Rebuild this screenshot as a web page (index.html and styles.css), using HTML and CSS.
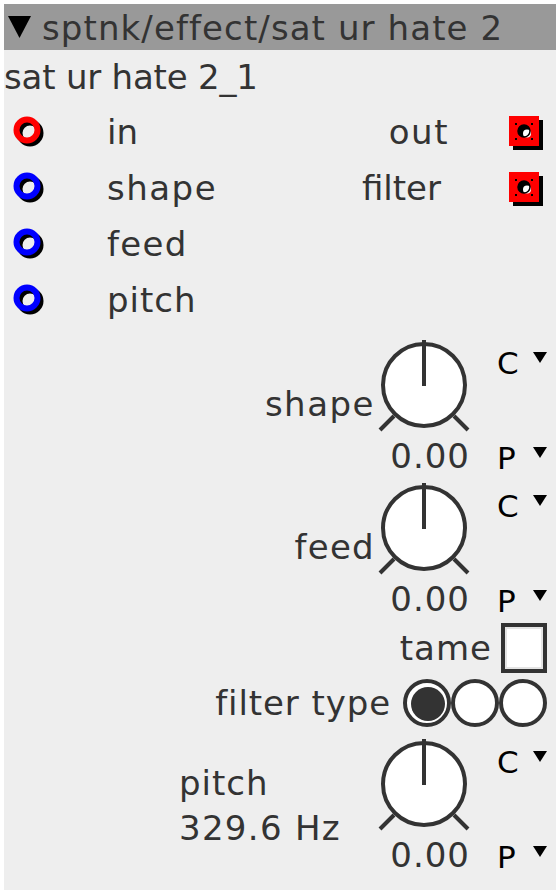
FILE: index.html
```html
<!DOCTYPE html>
<html>
<head>
<meta charset="utf-8">
<link rel="stylesheet" href="styles.css">
</head>
<body>
<div class="panel">
  <div class="header">
    <svg class="collapse" width="23" height="22" viewBox="0 0 23 22"><polygon points="0,0 23,0 11.5,22"/></svg>
    <span class="title">sptnk/effect/sat ur hate 2</span>
  </div>
  <div class="instance">sat ur hate 2_1</div>

  <div class="ports">
    <div class="inlets">
      <div class="port">
        <svg class="jack" width="40" height="40" viewBox="0 0 40 40"><circle class="shadow" cx="22" cy="22" r="10.5"/><circle class="ring red" cx="19" cy="19" r="10.5"/></svg>
        <span class="plabel">in</span>
      </div>
      <div class="port">
        <svg class="jack" width="40" height="40" viewBox="0 0 40 40"><circle class="shadow" cx="22" cy="22" r="10.5"/><circle class="ring blue" cx="19" cy="19" r="10.5"/></svg>
        <span class="plabel ls15">shape</span>
      </div>
      <div class="port">
        <svg class="jack" width="40" height="40" viewBox="0 0 40 40"><circle class="shadow" cx="22" cy="22" r="10.5"/><circle class="ring blue" cx="19" cy="19" r="10.5"/></svg>
        <span class="plabel ls13">feed</span>
      </div>
      <div class="port">
        <svg class="jack" width="40" height="40" viewBox="0 0 40 40"><circle class="shadow" cx="22" cy="22" r="10.5"/><circle class="ring blue" cx="19" cy="19" r="10.5"/></svg>
        <span class="plabel ls1">pitch</span>
      </div>
    </div>
    <div class="outlets">
      <div class="port out">
        <span class="olabel ls15">out</span>
        <svg class="outjack" width="40" height="40" viewBox="0 0 40 40"><rect class="oshadow" x="8" y="9" width="30" height="30"/><rect class="obox" x="4" y="5" width="30" height="30"/><g class="odots"><rect x="10" y="12" width="2" height="2"/><rect x="26" y="12" width="2" height="2"/><rect x="10" y="27" width="2" height="2"/><rect x="26" y="27" width="2" height="2"/></g><circle class="ohole" cx="19" cy="20" r="6"/><circle class="ohl" cx="22" cy="22.5" r="4"/><circle class="ohole2" cx="19" cy="20" r="6"/></svg>
      </div>
      <div class="port out">
        <span class="olabel filt">filter</span>
        <svg class="outjack" width="40" height="40" viewBox="0 0 40 40"><rect class="oshadow" x="8" y="9" width="30" height="30"/><rect class="obox" x="4" y="5" width="30" height="30"/><g class="odots"><rect x="10" y="12" width="2" height="2"/><rect x="26" y="12" width="2" height="2"/><rect x="10" y="27" width="2" height="2"/><rect x="26" y="27" width="2" height="2"/></g><circle class="ohole" cx="19" cy="20" r="6"/><circle class="ohl" cx="22" cy="22.5" r="4"/><circle class="ohole2" cx="19" cy="20" r="6"/></svg>
      </div>
    </div>
  </div>

  <div class="krow first">
    <div class="klabel ls15">shape</div>
    <div class="kcol">
      <svg class="knob" width="96" height="96" viewBox="0 0 96 96"><line x1="4" y1="92" x2="18" y2="78"/><line x1="92" y1="92" x2="78" y2="78"/><circle cx="48" cy="47" r="41"/><line x1="48" y1="2" x2="48" y2="48"/></svg>
      <div class="kval">0.00</div>
    </div>
    <div class="cp">
      <div class="cpi"><span class="cpt">C</span><svg class="tri" width="14" height="11" viewBox="0 0 14 11"><polygon points="0,0 14,0 7,11"/></svg></div>
      <div class="cpi"><span class="cpt">P</span><svg class="tri" width="14" height="11" viewBox="0 0 14 11"><polygon points="0,0 14,0 7,11"/></svg></div>
    </div>
  </div>

  <div class="krow">
    <div class="klabel ls13">feed</div>
    <div class="kcol">
      <svg class="knob" width="96" height="96" viewBox="0 0 96 96"><line x1="4" y1="92" x2="18" y2="78"/><line x1="92" y1="92" x2="78" y2="78"/><circle cx="48" cy="47" r="41"/><line x1="48" y1="2" x2="48" y2="48"/></svg>
      <div class="kval">0.00</div>
    </div>
    <div class="cp">
      <div class="cpi"><span class="cpt">C</span><svg class="tri" width="14" height="11" viewBox="0 0 14 11"><polygon points="0,0 14,0 7,11"/></svg></div>
      <div class="cpi"><span class="cpt">P</span><svg class="tri" width="14" height="11" viewBox="0 0 14 11"><polygon points="0,0 14,0 7,11"/></svg></div>
    </div>
  </div>

  <div class="crow tame">
    <span class="clabel ls1">tame</span>
    <div class="checkbox"></div>
  </div>

  <div class="crow ftype">
    <span class="clabel ls09">filter type</span>
    <svg class="radios" width="148" height="50" viewBox="0 0 148 50"><circle class="rc" cx="25" cy="25" r="22"/><circle class="rc" cx="73" cy="25" r="22"/><circle class="rc" cx="121" cy="25" r="22"/><circle class="rdot" cx="26" cy="26" r="17"/></svg>
  </div>

  <div class="krow last">
    <div class="klabel multi"><span class="ls1">pitch</span><br><span class="ls13">329.6 Hz</span></div>
    <div class="kcol">
      <svg class="knob" width="96" height="96" viewBox="0 0 96 96"><line x1="4" y1="92" x2="18" y2="78"/><line x1="92" y1="92" x2="78" y2="78"/><circle cx="48" cy="47" r="41"/><line x1="48" y1="2" x2="48" y2="48"/></svg>
      <div class="kval">0.00</div>
    </div>
    <div class="cp">
      <div class="cpi"><span class="cpt">C</span><svg class="tri" width="14" height="11" viewBox="0 0 14 11"><polygon points="0,0 14,0 7,11"/></svg></div>
      <div class="cpi"><span class="cpt">P</span><svg class="tri" width="14" height="11" viewBox="0 0 14 11"><polygon points="0,0 14,0 7,11"/></svg></div>
    </div>
  </div>
</div>
</body>
</html>
```
FILE: styles.css
```css
html, body {
  margin: 0;
  padding: 0;
  background: #ffffff;
}
body {
  padding: 4px;
  font-family: "DejaVu Sans", sans-serif;
  color: #333333;
  font-size: 34px;
}
.ls09 { letter-spacing: 0.9px; }
.ls1 { letter-spacing: 1px; }
.ls13 { letter-spacing: 1.3px; }
.ls15 { letter-spacing: 1.5px; }
.panel {
  width: 552px;
  height: 886px;
  background: #eeeeee;
  display: flex;
  flex-direction: column;
  box-sizing: border-box;
}
.header {
  height: 46px;
  background: #999999;
  display: flex;
  align-items: center;
  box-sizing: border-box;
  padding-left: 4px;
}
.collapse {
  display: block;
  margin-right: 11px;
}
.collapse polygon { fill: #000; }
.title {
  line-height: 46px;
  white-space: nowrap;
  padding-top: 2px;
  letter-spacing: 1.1px;
}
.instance {
  height: 54px;
  line-height: 54px;
  white-space: nowrap;
  letter-spacing: -0.2px;
}
.ports {
  display: flex;
  justify-content: space-between;
}
.inlets, .outlets {
  display: flex;
  flex-direction: column;
}
.port {
  height: 56px;
  display: flex;
  align-items: center;
  line-height: 56px;
}
.jack {
  display: block;
  margin-left: 4px;
  margin-top: -2px;
}
.jack .shadow { fill: none; stroke: #000; stroke-width: 6; }
.jack .ring { fill: none; stroke-width: 6; }
.jack .red { stroke: #ff0000; }
.jack .blue { stroke: #0000ff; }
.plabel { margin-left: 59px; }
.outlets { align-items: flex-end; }
.out { justify-content: flex-end; }
.olabel { margin-right: 56px; }
.olabel.filt { margin-right: 64px; }
.outjack { display: block; margin-right: 11px; margin-top: -2px; }
.oshadow { fill: #000; }
.obox { fill: #ff0000; }
.odots rect { fill: #000; }
.ohole { fill: #000; }
.ohl { fill: #fff; }
.ohole2 { fill: none; stroke: #000; stroke-width: 1.5; }

.krow {
  height: 139px;
  display: flex;
  justify-content: flex-end;
  align-items: flex-start;
}
.krow.first { margin-top: 10px; margin-bottom: 4px; }
.krow.last { margin-top: 7px; }
.klabel {
  padding-top: 46px;
  line-height: 40px;
  margin-right: 1px;
  text-align: right;
  white-space: nowrap;
}
.klabel.multi {
  padding-top: 24px;
  line-height: 45px;
  text-align: left;
  width: 194px;
  margin-right: 3px;
}
.kcol {
  width: 96px;
  display: flex;
  flex-direction: column;
}
.knob { display: block; }
.knob line { stroke: #333; stroke-width: 4; }
.knob circle { fill: #fff; stroke: #333; stroke-width: 4; }
.kval {
  margin-top: 4px;
  line-height: 36px;
  text-align: right;
  margin-right: 2px;
  letter-spacing: 1px;
  white-space: nowrap;
}
.cp {
  margin-left: 25px;
  width: 59px;
  height: 123px;
  padding-top: 11px;
  display: flex;
  flex-direction: column;
  justify-content: space-between;
}
.cpi {
  display: flex;
  align-items: flex-start;
  height: 28px;
}
.cpt {
  width: 36px;
  font-size: 31px;
  line-height: 28px;
  color: #000;
}
.tri { display: block; margin-top: 3px; }
.tri polygon { fill: #000; }

.crow {
  display: flex;
  justify-content: flex-end;
  align-items: center;
}
.crow.tame { height: 56px; line-height: 56px; }
.crow.ftype { height: 54px; line-height: 54px; }
.tame .clabel { margin-right: 9px; }
.checkbox {
  width: 46px;
  height: 50px;
  box-sizing: border-box;
  border: 4px solid #333;
  background: #fff;
  box-shadow: inset 0 0 0 2px #e4e4e4;
  margin-right: 9px;
}
.ftype .clabel { margin-right: 11px; }
.radios { display: block; margin-right: 6px; }
.rc { fill: #fff; stroke: #333; stroke-width: 4; }
.rdot { fill: #333; }
```
